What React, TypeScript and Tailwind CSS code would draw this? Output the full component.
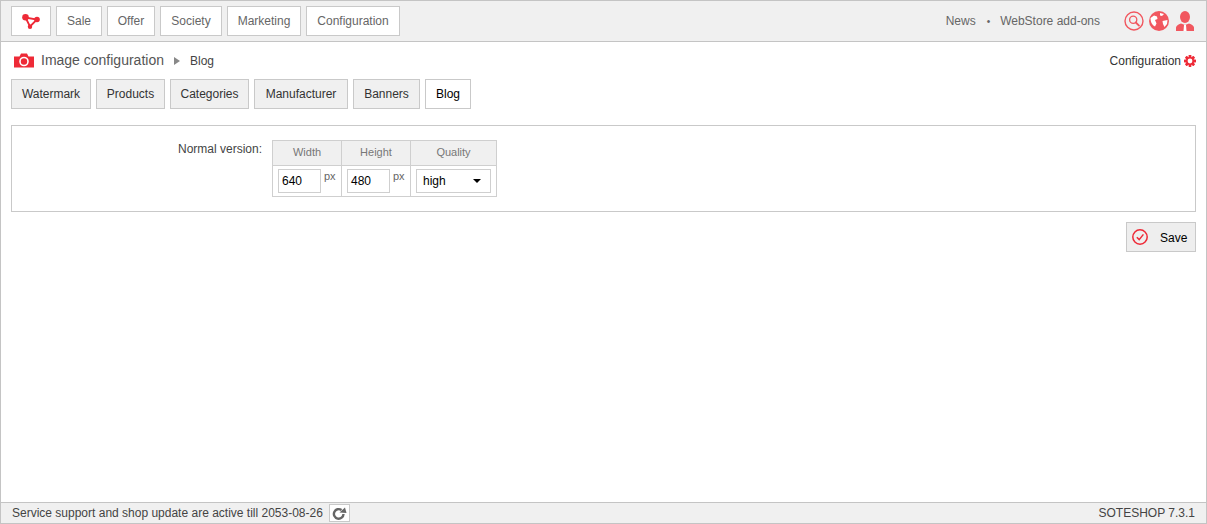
function Logo() {
  return (
    <svg width="18" height="15" viewBox="0 0 18 15">
      <path d="M3.5 3.5 L8 12.5 L15 5.5 Z" fill="none" stroke="#ee2a37" strokeWidth="1.8" />
      <circle cx="3.5" cy="3.3" r="3.3" fill="#ee2a37" />
      <circle cx="15" cy="5.5" r="2.8" fill="#ee2a37" />
      <circle cx="8" cy="12.8" r="2.2" fill="#ee2a37" />
    </svg>
  );
}

function Camera() {
  return (
    <svg width="20" height="15" viewBox="0 0 20 15">
      <path d="M0 3.5 H5.5 L7 0.5 H13 L14.5 3.5 H20 V14.5 H0 Z" fill="#ee2a37" />
      <circle cx="10" cy="8.5" r="4" fill="none" stroke="#fff" strokeWidth="1.6" />
    </svg>
  );
}

function Gear() {
  return (
    <svg width="12" height="12" viewBox="0 0 13 13">
      <g fill="#ee2a37">
        <rect x="5" y="0" width="3" height="13" rx="0.5" />
        <rect x="5" y="0" width="3" height="13" rx="0.5" transform="rotate(45 6.5 6.5)" />
        <rect x="5" y="0" width="3" height="13" rx="0.5" transform="rotate(90 6.5 6.5)" />
        <rect x="5" y="0" width="3" height="13" rx="0.5" transform="rotate(135 6.5 6.5)" />
      </g>
      <circle cx="6.5" cy="6.5" r="4.2" fill="#ee2a37" />
      <circle cx="6.5" cy="6.5" r="2.6" fill="#fff" />
    </svg>
  );
}

function SearchIcon() {
  return (
    <svg width="20" height="20" viewBox="0 0 20 20">
      <circle cx="10" cy="10" r="9" fill="none" stroke="#f1575f" strokeWidth="1.4" />
      <circle cx="9.2" cy="8.8" r="3.6" fill="none" stroke="#f1575f" strokeWidth="1.3" />
      <path d="M11.8 11.5 L15 14.6" stroke="#f1575f" strokeWidth="1.8" strokeLinecap="round" />
    </svg>
  );
}

function Globe() {
  return (
    <svg width="20" height="20" viewBox="0 0 20 20">
      <circle cx="10" cy="10" r="10" fill="#f1575f" />
      <path d="M1.5 7 L5 4.5 L8 5.5 L8.5 8 L6 9 L7.5 12.5 L6 15.5 Q1.5 13.5 1.5 7 Z" fill="#fff" />
      <path d="M11 2 L15 3 L13 5 L11 4.5 Z M13.5 10 L18.5 9 L18 13 L15.5 16 L14 13 Z" fill="#fff" />
    </svg>
  );
}

function User() {
  return (
    <svg width="18" height="20" viewBox="0 0 18 20">
      <ellipse cx="9" cy="6" rx="5" ry="6" fill="#f1575f" />
      <path d="M0 20 V16.5 Q0.5 14 5 12.5 L9 14 L13 12.5 Q17.5 14 18 16.5 V20 Z" fill="#f1575f" />
      <path d="M8 14 H10 L10.5 20 H7.5 Z" fill="#fff" />
    </svg>
  );
}

function Check() {
  return (
    <svg width="16" height="16" viewBox="0 0 16 16">
      <circle cx="8" cy="8" r="7.2" fill="none" stroke="#ee2a37" strokeWidth="1.5" />
      <path d="M4.8 8.2 L7.2 10.6 L11.4 5.4" fill="none" stroke="#ee2a37" strokeWidth="1.5" />
    </svg>
  );
}

function Refresh() {
  return (
    <svg width="15" height="13" viewBox="0 0 15 13">
      <path d="M11.5 7 A4.8 4.8 0 1 1 9.5 3" fill="none" stroke="#666" strokeWidth="2.4" />
      <path d="M7.5 5.5 L14.5 6 L13 0.5 Z" fill="#666" />
    </svg>
  );
}

const nav = [
  ["Sale", "w-[46px]"],
  ["Offer", "w-[48px]"],
  ["Society", "w-[62px]"],
  ["Marketing", "w-[74px]"],
  ["Configuration", "w-[94px]"],
];

const tabs = [
  ["Watermark", "w-[80px]"],
  ["Products", "w-[69px]"],
  ["Categories", "w-[79px]"],
  ["Manufacturer", "w-[94px]"],
  ["Banners", "w-[67px]"],
];

export default function App() {
  return (
    <div className="w-[1207px] h-[524px] flex flex-col bg-white border border-[#c4c4c4] overflow-hidden font-['Liberation_Sans',Arial,sans-serif] text-[12px] text-[#444]">
      <header className="h-[41px] shrink-0 bg-[#f0f0f0] border-b border-[#c4c4c4] flex items-center pl-[10px] pr-[12px]">
        <div className="w-[40px] h-[30px] mr-[5px] bg-white border border-[#c9c9c9] flex items-center justify-center">
          <Logo />
        </div>
        <nav className="flex gap-[5px]">
          {nav.map(([n, w]) => (
            <div key={n} className={`${w} h-[30px] bg-white border border-[#c9c9c9] flex items-center justify-center text-[#666]`}>
              {n}
            </div>
          ))}
        </nav>
        <div className="ml-auto flex items-center text-[#666]">
          <span>News</span>
          <span className="ml-[11px] mr-[10px] text-[10px]">•</span>
          <span>WebStore add-ons</span>
          <div className="ml-[24px] flex items-center gap-[5px]">
            <SearchIcon />
            <Globe />
            <span className="ml-[2px]"><User /></span>
          </div>
        </div>
      </header>

      <main className="flex-1 px-[10px]">
        <div className="h-[37px] flex items-center pl-[3px]">
          <Camera />
          <span className="ml-[7px] text-[14px] text-[#555]">Image configuration</span>
          <span className="ml-[10px] mr-[10px] w-0 h-0 border-y-[4px] border-y-transparent border-l-[6px] border-l-[#888]" />
          <span>Blog</span>
          <div className="ml-auto flex items-center gap-[3px] text-[#333]">
            <span>Configuration</span>
            <Gear />
          </div>
        </div>

        <div className="flex gap-[5px]">
          {tabs.map(([t, w]) => (
            <div key={t} className={`${w} h-[30px] bg-[#f0f0f0] border border-[#c9c9c9] flex items-center justify-center text-[#333]`}>
              {t}
            </div>
          ))}
          <div className="w-[46px] h-[30px] bg-white border border-[#c9c9c9] flex items-center justify-center text-black">
            Blog
          </div>
        </div>

        <section className="mt-[16px] h-[87px] border border-[#c9c9c9] flex items-start pt-[14px]">
          <div className="w-[260px] pr-[10px] pt-[2px] text-right text-[#444] leading-[14px]">Normal version:</div>
          <table className="border-collapse text-[11px]">
            <thead>
              <tr className="h-[25px] bg-[#f0f0f0] text-[#777]">
                <th className="w-[69px] border border-[#cfcfcf] font-normal pb-[2px]">Width</th>
                <th className="w-[69px] border border-[#cfcfcf] font-normal pb-[2px]">Height</th>
                <th className="w-[86px] border border-[#cfcfcf] font-normal pb-[2px]">Quality</th>
              </tr>
            </thead>
            <tbody>
              <tr className="h-[31px]">
                {["640", "480"].map((v) => (
                  <td key={v} className="border border-[#cfcfcf] px-[5px]">
                    <div className="flex items-start">
                      <div className="w-[43px] h-[24px] border border-[#cfcfcf] flex items-center pl-[3px] text-[12px] text-black">{v}</div>
                      <span className="ml-[3px] text-[#666] leading-[14px]">px</span>
                    </div>
                  </td>
                ))}
                <td className="border border-[#cfcfcf] px-[5px]">
                  <div className="w-[75px] h-[24px] border border-[#cfcfcf] flex items-center justify-between pl-[6px] pr-[9px] text-[12px] text-black">
                    <span>high</span>
                    <span className="w-0 h-0 border-x-[4px] border-x-transparent border-t-[4px] border-t-black" />
                  </div>
                </td>
              </tr>
            </tbody>
          </table>
        </section>

        <div className="mt-[10px] flex justify-end">
          <div className="w-[70px] h-[30px] bg-[#eeeeee] border border-[#c9c9c9] flex items-center pl-[5px] text-black">
            <Check />
            <span className="ml-[12px] pt-[1px]">Save</span>
          </div>
        </div>
      </main>

      <footer className="h-[21px] shrink-0 bg-[#f0f0f0] border-t border-[#c4c4c4] flex items-center pl-[11px] pr-[11px] text-[#444]">
        <span>Service support and shop update are active till 2053-08-26</span>
        <div className="ml-[6px] w-[21px] h-[18px] bg-white border border-[#c9c9c9] flex items-center justify-center">
          <Refresh />
        </div>
        <span className="ml-auto">SOTESHOP 7.3.1</span>
      </footer>
    </div>
  );
}
